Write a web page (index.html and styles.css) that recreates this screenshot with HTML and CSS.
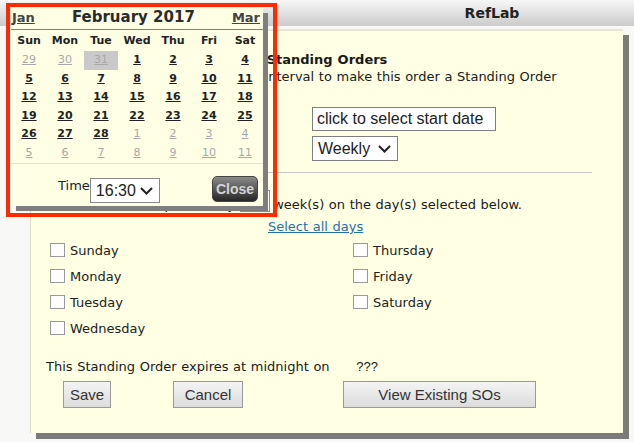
FILE: index.html
```html
<!DOCTYPE html>
<html>
<head>
<meta charset="utf-8">
<link rel="stylesheet" href="styles.css">
</head>
<body>
<div class="topbar"><span class="brand">RefLab</span></div>
<div class="panel">
  <div class="intro">
    <div class="title">Standing Orders</div>
    <div class="lead">Choose a start date and interval to make this order a Standing Order</div>
  </div>
  <div class="form">
    <div class="frow"><span class="flabel"></span><div class="datebox">click to select start date</div></div>
    <div class="frow"><span class="flabel"></span><div class="select"><span>Weekly</span><svg width="13" height="8" viewBox="0 0 13 8"><path d="M1 1 L6.5 6.5 L12 1" fill="none" stroke="#222" stroke-width="2"/></svg></div></div>
  </div>
  <div class="rule"></div>
  <div class="repeat"><span>Repeat every</span><span class="weeks"></span><span>week(s) on the day(s) selected below.</span></div>
  <div class="selall"><a href="#">Select all days</a></div>
  <div class="days">
    <label class="day"><span class="box"></span>Sunday</label>
    <label class="day"><span class="box"></span>Monday</label>
    <label class="day"><span class="box"></span>Tuesday</label>
    <label class="day"><span class="box"></span>Wednesday</label>
    <label class="day"><span class="box"></span>Thursday</label>
    <label class="day"><span class="box"></span>Friday</label>
    <label class="day"><span class="box"></span>Saturday</label>
  </div>
  <div class="expires">This Standing Order expires at midnight on <span class="q">???</span></div>
  <div class="actions">
    <button class="btn save">Save</button>
    <button class="btn cancel">Cancel</button>
    <button class="btn view">View Existing SOs</button>
  </div>
</div>

<div class="annot">
  <div class="cal">
    <div class="cal-head"><a class="nav" href="#">Jan</a><span class="month">February 2017</span><a class="nav" href="#">Mar</a></div>
    <div class="wk">
      <span>Sun</span><span>Mon</span><span>Tue</span><span>Wed</span><span>Thu</span><span>Fri</span><span>Sat</span>
    </div>
    <div class="grid">
      <a class="o">29</a><a class="o">30</a><a class="o sel">31</a><a>1</a><a>2</a><a>3</a><a>4</a>
      <a>5</a><a>6</a><a>7</a><a>8</a><a>9</a><a>10</a><a>11</a>
      <a>12</a><a>13</a><a>14</a><a>15</a><a>16</a><a>17</a><a>18</a>
      <a>19</a><a>20</a><a>21</a><a>22</a><a>23</a><a>24</a><a>25</a>
      <a>26</a><a>27</a><a>28</a><a class="o">1</a><a class="o">2</a><a class="o">3</a><a class="o">4</a>
      <a class="o">5</a><a class="o">6</a><a class="o">7</a><a class="o">8</a><a class="o">9</a><a class="o">10</a><a class="o">11</a>
    </div>
    <div class="cal-foot">
      <span class="tlabel">Time</span>
      <div class="tsel"><span>16:30</span><svg width="13" height="8" viewBox="0 0 13 8"><path d="M1 1 L6.5 6.5 L12 1" fill="none" stroke="#222" stroke-width="2"/></svg></div>
      <button class="close">Close</button>
    </div>
  </div>
</div>
</body>
</html>
```
FILE: styles.css
```css
* { box-sizing: border-box; }
html, body { margin: 0; padding: 0; }
body {
  width: 634px;
  height: 442px;
  overflow: hidden;
  position: relative;
  background: #f8f8f6;
  font-family: "DejaVu Sans", Verdana, sans-serif;
  font-size: 13px;
  color: #1a1a1a;
}
.topbar {
  height: 26px;
  background: linear-gradient(#f7f7f7, #cbcbcb);
  display: flex;
  align-items: center;
  padding-left: 350px;
}
.brand {
  flex: 1;
  text-align: center;
  font-weight: bold;
  font-size: 14px;
  color: #222;
}
.panel {
  margin: 3px 0 0 30px;
  width: 593px;
  height: 404px;
  background: #ffffe3;
  border-top: 2px solid #e6e6d2;
  border-left: 1px solid #dcdccc;
  box-shadow: 6px 6px 0 #7b7b7b;
  word-spacing: 0.5px;
}
.intro {
  padding-top: 20px;
  text-align: center;
  line-height: 17px;
}
.title { font-weight: bold; }
.lead { padding-left: 4px; }
.form {
  margin-top: 22px;
  display: flex;
  flex-direction: column;
  gap: 5px;
  word-spacing: 0;
}
.frow { display: flex; align-items: center; }
.flabel { width: 281px; }
.datebox {
  width: 184px;
  height: 24px;
  border: 1px solid #7f7f7f;
  background: #fff;
  font-family: "Liberation Sans", Arial, sans-serif;
  font-size: 16px;
  line-height: 22px;
  padding-left: 4px;
  color: #222;
}
.select {
  width: 86px;
  height: 25px;
  border: 1px solid #7f7f7f;
  background: #fff;
  display: flex;
  align-items: center;
  justify-content: space-between;
  padding: 0 6px 0 5px;
  font-family: "Liberation Sans", Arial, sans-serif;
  font-size: 16px;
  color: #222;
}
.rule {
  margin: 11px 31px 0;
  border-top: 1px solid #c4c4c4;
  height: 0;
}
.repeat {
  margin-top: 17px;
  height: 22px;
  display: flex;
  justify-content: center;
  align-items: flex-end;
  padding-left: 16px;
}
.repeat span { line-height: 17px; margin-bottom: -1px; }
.repeat .weeks {
  width: 30px;
  height: 22px;
  margin: 0 3px 0 5px;
  border: 1px solid #8a8a8a;
  background: #fff;
}
.selall {
  margin-top: 7px;
  line-height: 16px;
  padding-left: 237px;
}
.selall a { color: #2470b3; text-decoration: underline; }
.days {
  margin-top: 2px;
  padding-left: 19px;
  display: grid;
  grid-template-columns: 303px 1fr;
  grid-template-rows: repeat(4, 26px);
  grid-auto-flow: column;
}
.day { display: flex; align-items: center; color: #222; }
.box {
  width: 15px;
  height: 14px;
  border: 1px solid #999;
  background: #fdfdfd;
  margin-right: 5px;
}
.expires {
  margin-top: 17px;
  line-height: 17px;
  padding-left: 15px;
}
.q {
  margin-left: 22px;
  font-family: "Liberation Sans", Arial, sans-serif;
}
.actions {
  margin-top: 6px;
  display: flex;
  word-spacing: 0;
}
.btn {
  height: 27px;
  border: 1px solid #999;
  background: linear-gradient(#f4f4f4, #dcdcdc);
  font-family: "Liberation Sans", Arial, sans-serif;
  font-size: 15px;
  color: #333;
  padding: 0;
}
.save { margin-left: 32px; width: 48px; }
.cancel { margin-left: 62px; width: 70px; }
.view { margin-left: 100px; width: 193px; }

/* calendar popup with annotation outline */
.annot {
  position: absolute;
  left: 6px;
  top: 3px;
  width: 271px;
  height: 214px;
  border: 4px solid #ff2a00;
}
.cal {
  position: absolute;
  left: 1px;
  top: 1px;
  width: 252px;
  height: 198px;
  background: #ffffe6;
  box-shadow: 5px 5px 0 #7f7f7f;
}
.cal-head {
  height: 22px;
  display: flex;
  align-items: center;
  justify-content: space-between;
  padding: 0 3px 3px 1px;
  border-bottom: 1px solid #808080;
}
.nav {
  font-weight: bold;
  font-size: 13px;
  color: #444;
  text-decoration: underline;
}
.month {
  font-weight: bold;
  font-size: 15px;
  color: #2b2b2b;
}
.wk, .grid {
  display: grid;
  grid-template-columns: repeat(7, 36px);
  text-align: center;
}
.wk {
  height: 21px;
  align-items: center;
  font-weight: bold;
  font-size: 11px;
  color: #222;
}
.grid {
  grid-auto-rows: 18.5px;
  font-size: 11px;
  line-height: 14px;
  font-weight: bold;
}
.grid a {
  display: flex;
  align-items: center;
  justify-content: center;
  color: #222;
  text-decoration: underline;
}
.grid a.o { color: #a8a8a8; font-weight: normal; }
.grid a.sel { background: #c9c9c9; margin: 0 1px; }
.cal-foot {
  margin-top: 1px;
  border-top: 1px solid #e2e2d2;
  height: 43px;
  display: flex;
  align-items: flex-start;
  padding-left: 47px;
}
.tlabel { margin-top: 14px; line-height: 16px; color: #222; }
.tsel {
  margin-top: 14px;
  width: 70px;
  height: 25px;
  border: 1px solid #888;
  background: #fff;
  display: flex;
  align-items: center;
  justify-content: space-between;
  padding: 0 6px 0 5px;
  font-family: "Liberation Sans", Arial, sans-serif;
  font-size: 16px;
  color: #222;
}
.close {
  margin: 12px 5px 0 auto;
  width: 46px;
  height: 26px;
  border: 1px solid #444;
  border-radius: 5px;
  background: linear-gradient(#8a8a8a, #262626);
  color: #d4d4d4;
  font-family: "Liberation Sans", Arial, sans-serif;
  font-weight: bold;
  font-size: 14px;
  padding: 0;
}
```
